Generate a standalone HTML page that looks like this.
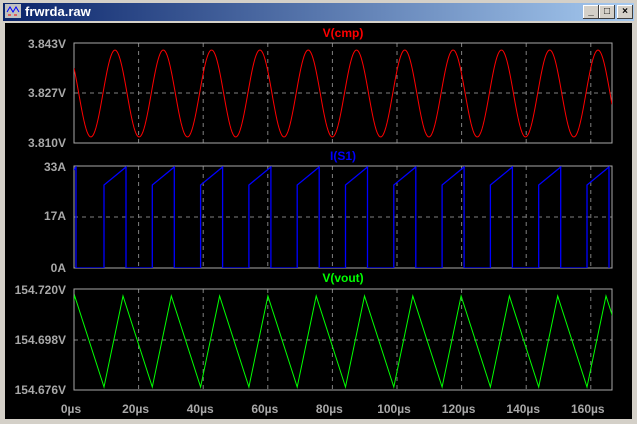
<!DOCTYPE html>
<html><head><meta charset="utf-8"><style>
html,body{margin:0;padding:0;width:637px;height:424px;overflow:hidden;background:#d4d0c8;font-family:"Liberation Sans",sans-serif}
#tb{position:absolute;left:3px;top:3px;width:631px;height:18px;background:linear-gradient(90deg,#0a246a,#a6caf0)}
#tb span{position:absolute;left:22px;top:1px;color:#fff;font-weight:bold;font-size:13px}
.btn{position:absolute;top:2px;width:16px;height:14px;background:#d4d0c8;box-shadow:inset -1px -1px #404040,inset 1px 1px #fff;font-size:10px;line-height:14px;text-align:center;font-weight:bold}
svg{position:absolute;left:0;top:0}
text{font-family:"Liberation Sans",sans-serif;font-size:12px;font-weight:bold}
</style></head><body>
<div id="tb"><svg width="18" height="16" style="left:2px;top:1px"><rect width="16" height="14" fill="#c0c0c0"/><path d="M2 8 L5 3 L8 8 L11 3 L14 8" stroke="#00f" fill="none"/><path d="M3 11h3M9 11h3" stroke="#f00"/></svg><span>frwrda.raw</span>
<div class="btn" style="left:580px">_</div><div class="btn" style="left:596px">□</div><div class="btn" style="left:614px">×</div></div>
<svg width="637" height="424">
<defs><clipPath id="c1"><rect x="74" y="43" width="538" height="100"/></clipPath>
<clipPath id="c2"><rect x="74" y="166" width="538" height="102"/></clipPath>
<clipPath id="c3"><rect x="74" y="289" width="538" height="101"/></clipPath></defs>
<rect x="5" y="23" width="627" height="396" fill="#000"/>
<path id="grid" stroke="#808080" stroke-dasharray="4,4" fill="none"/>
<g stroke="#a8a8a8" fill="none">
<rect x="74" y="43" width="538" height="100"/>
<rect x="74" y="166" width="538" height="102"/>
<rect x="74" y="289" width="538" height="101"/>
</g>
<path id="p1" stroke="#f00" fill="none" clip-path="url(#c1)"/>
<path id="p2" stroke="#00f" fill="none" stroke-width="1.3" clip-path="url(#c2)"/>
<path id="p3" stroke="#0f0" fill="none" clip-path="url(#c3)"/>
<g fill="#a8a8a8" text-anchor="end">
<text x="66" y="48">3.843V</text><text x="66" y="97">3.827V</text><text x="66" y="147">3.810V</text>
<text x="66" y="171">33A</text><text x="66" y="220">17A</text><text x="66" y="272">0A</text>
<text x="66" y="294">154.720V</text><text x="66" y="344">154.698V</text><text x="66" y="394">154.676V</text>
</g>
<g fill="#a8a8a8" text-anchor="middle" id="xl"></g>
<text x="343" y="37" fill="#f00" text-anchor="middle">V(cmp)</text>
<text x="343" y="160" fill="#00f" text-anchor="middle">I(S1)</text>
<text x="343" y="282" fill="#0f0" text-anchor="middle">V(vout)</text>
</svg>
<script>
var d="",xl="";
for(var i=0;i<=8;i++){var x=74+i*64.6;
 if(i>0){d+="M"+x+" 43V143M"+x+" 166V268M"+x+" 289V390";}
 xl+='<text x="'+(x-3)+'" y="413">'+(i*20)+'µs</text>';}
d+="M74 93H612M74 217H612M74 340H612";
document.getElementById("grid").setAttribute("d",d);
document.getElementById("xl").innerHTML=xl;
var P=48.3,s="",t="",c="";
for(var x=74;x<=612;x+=1){var ph=(x-115)/P*2*Math.PI;s+=(x==74?"M":"L")+x+" "+(93.5-43.5*Math.cos(ph)).toFixed(1);}
document.getElementById("p1").setAttribute("d",s);
var pts=[];for(var k=-1;k<13;k++){var tr=104+k*P;pts.push([tr,387]);pts.push([tr+19,296]);}
for(var j=0;j<pts.length;j++){t+=(j==0?"M":"L")+pts[j][0].toFixed(1)+" "+pts[j][1];}
document.getElementById("p3").setAttribute("d",t);
c="M74 170L76 167L76 268";
for(var k=0;k<11;k++){var r=104+k*P,e=r+22;if(r>612)break;var ee=Math.min(e,612);
 c+="L"+r.toFixed(1)+" 268L"+r.toFixed(1)+" 185L"+ee.toFixed(1)+" "+(185-18*(ee-r)/22).toFixed(1);
 if(e<612)c+="L"+e.toFixed(1)+" 268";}
document.getElementById("p2").setAttribute("d",c);
</script>
</body></html>
